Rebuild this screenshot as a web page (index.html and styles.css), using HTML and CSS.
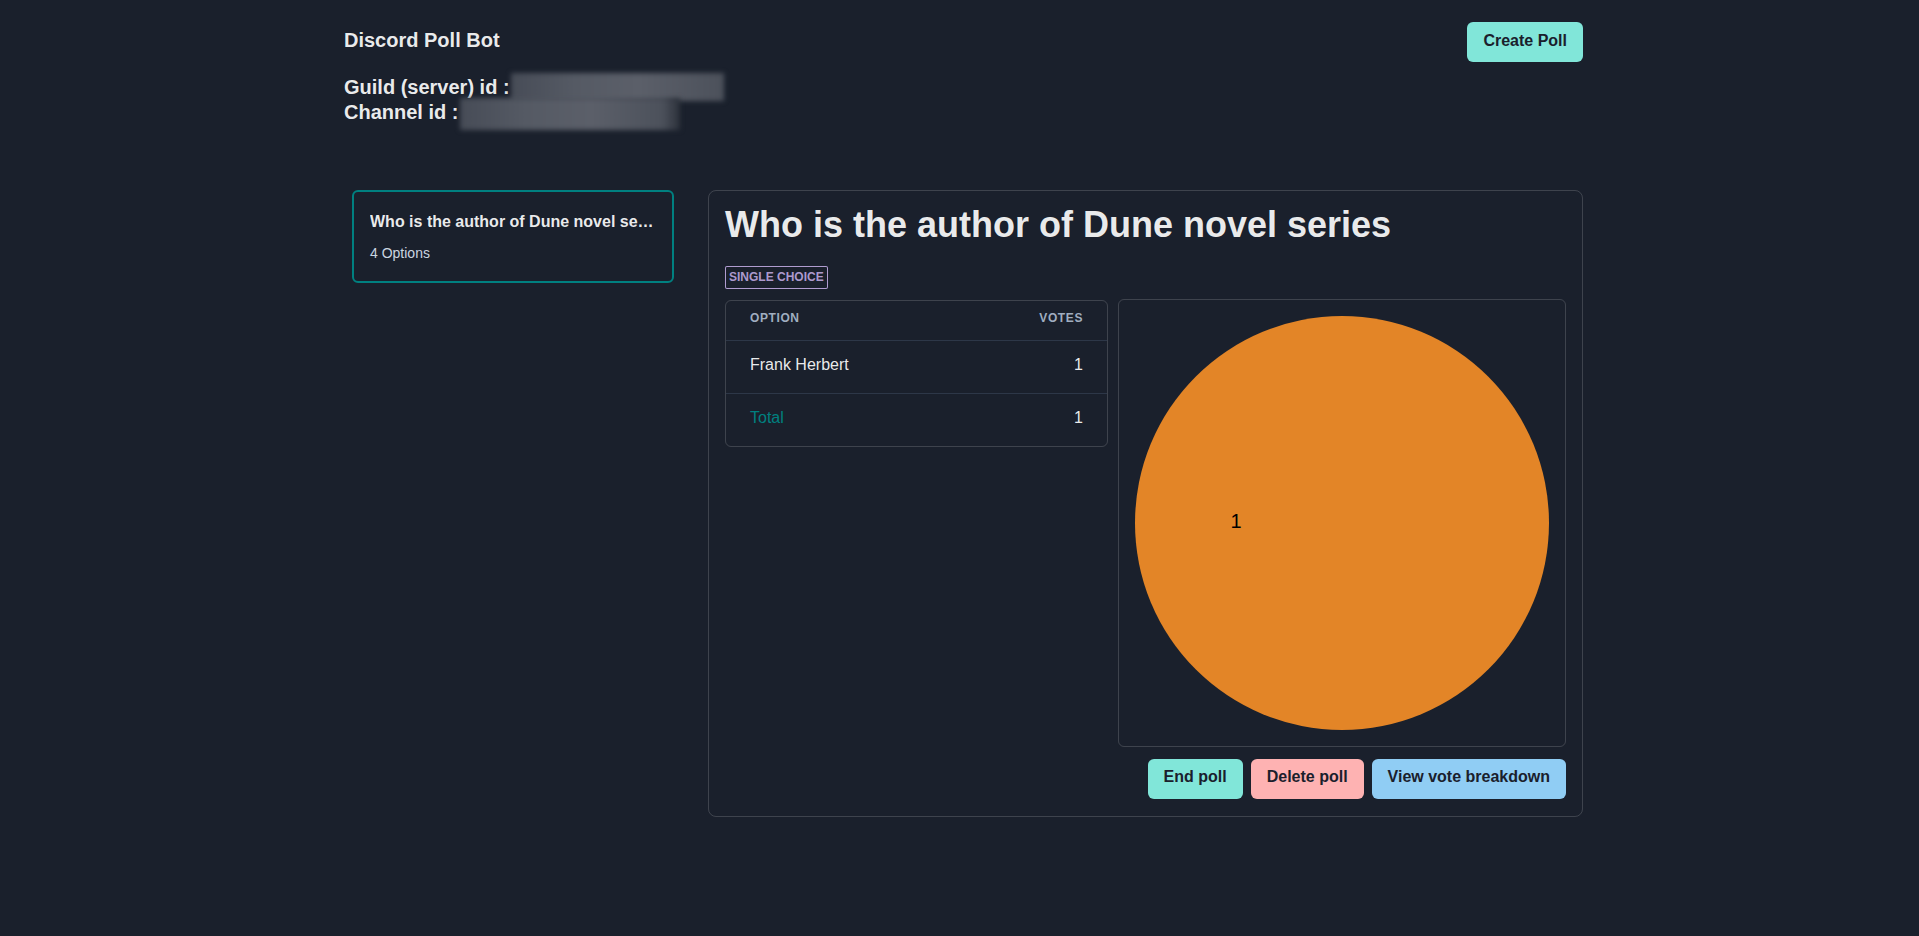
FILE: index.html
```html
<!DOCTYPE html>
<html lang="en">
<head>
<meta charset="utf-8">
<title>Discord Poll Bot</title>
<link rel="stylesheet" href="styles.css">
</head>
<body>
<div class="page">
  <header class="header">
    <div class="header-left">
      <div class="brand">Discord Poll Bot</div>
      <div class="info">
        <div class="info-row">Guild (server) id :<span class="blur blur-guild"></span></div>
        <div class="info-row">Channel id :<span class="blur blur-channel"></span></div>
      </div>
    </div>
    <button class="btn btn-teal btn-create">Create Poll</button>
  </header>

  <main class="content">
    <aside class="sidebar">
      <div class="poll-card">
        <div class="poll-card-title">Who is the author of Dune novel series</div>
        <div class="poll-card-sub">4 Options</div>
      </div>
    </aside>

    <section class="panel">
      <h1 class="panel-title">Who is the author of Dune novel series</h1>
      <div class="badge-wrap"><span class="badge">Single choice</span></div>
      <div class="panel-row">
        <div class="table-wrap">
          <table class="votes">
            <thead>
              <tr><th>Option</th><th class="num">Votes</th></tr>
            </thead>
            <tbody>
              <tr><td>Frank Herbert</td><td class="num">1</td></tr>
            </tbody>
            <tfoot>
              <tr><td class="total">Total</td><td class="num">1</td></tr>
            </tfoot>
          </table>
        </div>
        <div class="chart">
          <svg width="446" height="446" viewBox="0 0 446 446">
            <circle cx="223" cy="223" r="207" fill="#E38527"/>
            <text x="117" y="228" class="pie-label" text-anchor="middle">1</text>
          </svg>
        </div>
      </div>
      <div class="actions">
        <button class="btn btn-teal">End poll</button>
        <button class="btn btn-red">Delete poll</button>
        <button class="btn btn-blue">View vote breakdown</button>
      </div>
    </section>
  </main>
</div>
</body>
</html>
```

FILE: styles.css
```css
* { box-sizing: border-box; }

html, body {
  margin: 0;
  background: #1A202C;
}

body {
  font-family: "Liberation Sans", Arial, Helvetica, sans-serif;
  color: rgba(255, 255, 255, 0.92);
}

.page {
  width: 1247px;
  margin: 0 auto;
  padding-left: 8px;
}

.header {
  display: flex;
  justify-content: space-between;
  align-items: flex-start;
  padding-top: 22px;
}

.brand {
  margin-top: 6px;
  font-size: 20px;
  font-weight: 700;
  line-height: 24px;
}

.info {
  margin-top: 23px;
}

.info-row {
  display: flex;
  align-items: flex-start;
  height: 25px;
  font-size: 20px;
  font-weight: 700;
  line-height: 25px;
  white-space: nowrap;
}

.blur {
  display: inline-block;
  margin-top: -2px;
  background: linear-gradient(90deg, #474c57 0%, #555a64 30%, #5b5f69 60%, #4c515b 100%);
  filter: blur(2.5px);
}

.blur-guild {
  width: 213px;
  height: 28px;
  margin-left: 1px;
}

.blur-channel {
  width: 220px;
  height: 32px;
  margin-left: 2px;
  background: linear-gradient(90deg, #474c57 0%, #555a64 30%, #5b5f69 60%, #4c515b 92%, #2c313b 100%);
}

.btn {
  display: inline-flex;
  align-items: center;
  justify-content: center;
  height: 40px;
  padding: 0 16px 5px;
  border: 0;
  border-radius: 6px;
  font-family: inherit;
  font-size: 16px;
  font-weight: 700;
  line-height: 24px;
  color: #1A202C;
  cursor: pointer;
}

.btn-create {
  padding-bottom: 3px;
}

.btn-teal { background: #81E6D9; }
.btn-red { background: #FEB2B2; }
.btn-blue { background: #90CDF4; }

.content {
  display: flex;
  align-items: flex-start;
  gap: 34px;
  margin-top: 65px;
  padding-left: 8px;
}

.sidebar {
  width: 322px;
  flex: none;
}

.poll-card {
  border: 2px solid #008080;
  border-radius: 6px;
  padding: 18px 16px;
}

.poll-card-title {
  font-size: 16px;
  font-weight: 700;
  line-height: 24px;
  white-space: nowrap;
  overflow: hidden;
  text-overflow: ellipsis;
}

.poll-card-sub {
  margin-top: 9px;
  font-size: 14px;
  line-height: 20px;
  color: #CBD5E0;
}

.panel {
  width: 875px;
  flex: none;
  border: 1px solid rgba(255, 255, 255, 0.16);
  border-radius: 8px;
  padding: 16px 16px 17px;
}

.panel-title {
  margin: 0;
  font-size: 36px;
  font-weight: 700;
  line-height: 35px;
}

.badge-wrap {
  margin-top: 24px;
  height: 23px;
}

.badge {
  display: inline-block;
  height: 23px;
  padding: 0 4px;
  font-size: 12px;
  font-weight: 700;
  line-height: 23px;
  text-transform: uppercase;
  color: rgba(214, 188, 250, 0.8);
  box-shadow: inset 0 0 0 1px rgba(214, 188, 250, 0.8);
  border-radius: 2px;
}

.panel-row {
  display: flex;
  align-items: flex-start;
  gap: 10px;
  margin-top: 10px;
}

.table-wrap {
  width: 383px;
  flex: none;
  margin-top: 1px;
  border: 1px solid rgba(255, 255, 255, 0.16);
  border-radius: 6px;
  overflow: hidden;
}

.votes {
  width: 100%;
  border-collapse: collapse;
}

.votes th {
  height: 39px;
  padding: 9px 24px 14px;
  font-size: 12px;
  font-weight: 700;
  line-height: 16px;
  letter-spacing: 0.05em;
  text-transform: uppercase;
  text-align: left;
  color: #A0AEC0;
  border-bottom: 1px solid #2D3748;
}

.votes td {
  padding: 14px 24px 18px;
  font-size: 16px;
  line-height: 20px;
  border-bottom: 1px solid #2D3748;
}

.votes tfoot td {
  border-bottom: 0;
  padding-top: 14px;
  padding-bottom: 18px;
}

.votes .num {
  text-align: right;
}

.votes .total {
  color: #008080;
}

.chart {
  width: 448px;
  height: 448px;
  flex: none;
  border: 1px solid rgba(255, 255, 255, 0.16);
  border-radius: 6px;
}

.chart svg {
  display: block;
}

.pie-label {
  font-family: "Liberation Sans", Arial, sans-serif;
  font-size: 20px;
  fill: #000;
}

.actions {
  display: flex;
  justify-content: flex-end;
  gap: 8px;
  margin-top: 12px;
}
```
